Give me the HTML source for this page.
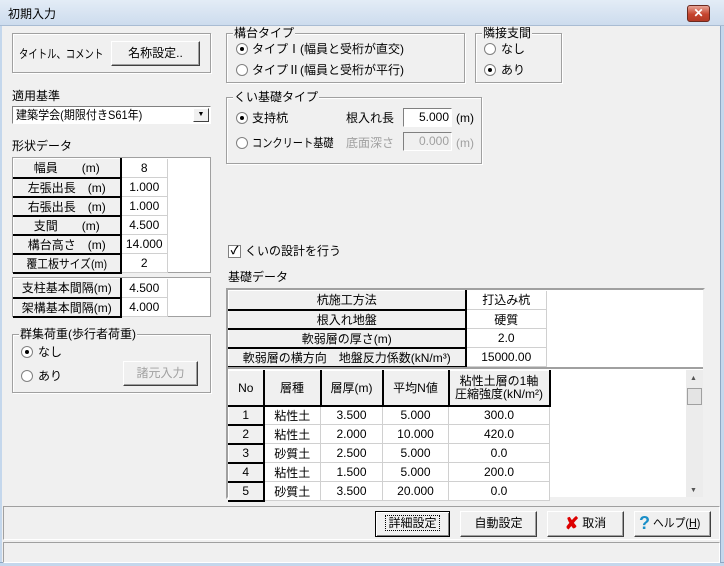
<!DOCTYPE html><html><head><meta charset="utf-8"><style>
*{box-sizing:border-box}
body{margin:0;width:724px;height:566px;overflow:hidden;background:#f0f0f0;font-family:"Liberation Sans","Noto Sans CJK JP",sans-serif;font-size:12px;color:#000;position:relative}
.a{position:absolute}
.t{position:absolute;white-space:nowrap;line-height:14px}
.sx{display:inline-block;transform-origin:left center}
.grp{position:absolute;border:1px solid #a0a0a0;box-shadow:inset 1px 1px 0 #fff,1px 1px 0 #fff}
.grp>.lg{position:absolute;top:-8px;left:6px;background:#f0f0f0;padding:0 1px;line-height:14px}
.btn{position:absolute;background:#f0f0f0;border:1px solid;border-color:#fff #404040 #404040 #fff;box-shadow:inset -1px -1px 0 #a0a0a0;text-align:center;line-height:22px}
.rad{position:absolute;width:12px;height:12px;border-radius:50%;border:1px solid #808080;background:#fff}
.rad.on::after{content:"";position:absolute;left:3px;top:3px;width:4px;height:4px;border-radius:50%;background:#000}
.sunk{position:absolute;border:1px solid;border-color:#a0a0a0 #fff #fff #a0a0a0;background:#fff}
table{border-collapse:collapse;position:absolute;font-size:12px}
td{padding:0;text-align:center;height:19px;white-space:nowrap}
td.h{background:#f0f0f0;border-top:1px solid #fff;border-left:1px solid #fff;border-right:2px solid #000;border-bottom:2px solid #000}
td.v{background:#fff;border-right:1px solid #d0d0d0;border-bottom:1px solid #d0d0d0}
</style></head><body>
<div class="a" style="left:0;top:0;width:724px;height:26px;background:linear-gradient(#e3ecf6,#cddcee);border-bottom:1px solid #a9bcd3"></div>
<div class="t" style="left:8px;top:7px;font-size:12px">初期入力</div>
<div class="a" style="left:687px;top:5px;width:23px;height:17px;background:linear-gradient(#e8a496,#c6452f 55%,#b23a25);border:1px solid #6b2a20;border-radius:3px;color:#fff;text-align:center;font-weight:bold;line-height:15px;font-size:12px">✕</div>
<div class="a" style="left:0;top:26px;width:2px;height:540px;background:#c4d7ec"></div>
<div class="a" style="left:720px;top:26px;width:4px;height:540px;background:#c4d7ec;border-left:1px solid #8fa8c4"></div>
<div class="a" style="left:0;top:562px;width:724px;height:4px;background:#c4d7ec;border-top:1px solid #8fa8c4"></div>

<div class="grp" style="left:12px;top:33px;width:199px;height:40px"></div>
<div class="t" style="left:19px;top:47px"><span class="sx" style="transform:scaleX(.78)">タイトル、コメント</span></div>
<div class="btn" style="left:111px;top:41px;width:89px;height:25px">名称設定..</div>

<div class="t" style="left:12px;top:89px">適用基準</div>
<div class="sunk" style="left:12px;top:106px;width:199px;height:18px;border-color:#808080 #fff #fff #808080"></div>
<div class="t" style="left:16px;top:108px"><span class="sx" style="transform:scaleX(.92)">建築学会(期限付きS61年)</span></div>
<div class="a" style="left:193px;top:108px;width:16px;height:14px;background:#f0f0f0;border:1px solid;border-color:#fff #404040 #404040 #fff;font-size:7px;text-align:center;line-height:12px">▼</div>

<div class="t" style="left:12px;top:139px">形状データ</div>
<div class="a" style="left:12px;top:157px;width:199px;height:116px;background:#fff;border:1px solid #a0a0a0"></div>
<table style="left:13px;top:158px">
<tr><td class="h" style="width:107px">幅員　　(m)</td><td class="v" style="width:47px">8</td></tr>
<tr><td class="h">左張出長　(m)</td><td class="v">1.000</td></tr>
<tr><td class="h">右張出長　(m)</td><td class="v">1.000</td></tr>
<tr><td class="h">支間　　(m)</td><td class="v">4.500</td></tr>
<tr><td class="h">構台高さ　(m)</td><td class="v">14.000</td></tr>
<tr><td class="h"><span class="sx" style="transform:scaleX(.9);transform-origin:center">覆工板サイズ(m)</span></td><td class="v">2</td></tr>
</table>
<div class="a" style="left:12px;top:277px;width:199px;height:40px;background:#fff;border:1px solid #a0a0a0"></div>
<table style="left:13px;top:278px">
<tr><td class="h" style="width:107px">支柱基本間隔(m)</td><td class="v" style="width:47px">4.500</td></tr>
<tr><td class="h">架構基本間隔(m)</td><td class="v">4.000</td></tr>
</table>

<div class="grp" style="left:12px;top:334px;width:199px;height:59px"><span class="lg">群集荷重(歩行者荷重)</span></div>
<div class="rad on" style="left:21px;top:346px"></div><div class="t" style="left:38px;top:345px">なし</div>
<div class="rad" style="left:21px;top:370px"></div><div class="t" style="left:38px;top:369px">あり</div>
<div class="btn" style="left:123px;top:361px;width:75px;height:25px;color:#a0a0a0">諸元入力</div>

<div class="grp" style="left:226px;top:33px;width:239px;height:50px"><span class="lg">構台タイプ</span></div>
<div class="rad on" style="left:236px;top:43px"></div><div class="t" style="left:252px;top:42px">タイプⅠ(幅員と受桁が直交)</div>
<div class="rad" style="left:236px;top:64px"></div><div class="t" style="left:252px;top:63px">タイプⅡ(幅員と受桁が平行)</div>
<div class="grp" style="left:475px;top:33px;width:87px;height:50px"><span class="lg">隣接支間</span></div>
<div class="rad" style="left:484px;top:43px"></div><div class="t" style="left:501px;top:42px">なし</div>
<div class="rad on" style="left:484px;top:64px"></div><div class="t" style="left:501px;top:63px">あり</div>

<div class="grp" style="left:226px;top:97px;width:256px;height:67px"><span class="lg">くい基礎タイプ</span></div>
<div class="rad on" style="left:236px;top:112px"></div><div class="t" style="left:252px;top:111px">支持杭</div>
<div class="t" style="left:346px;top:111px">根入れ長</div>
<div class="sunk" style="left:403px;top:108px;width:49px;height:19px;border-color:#808080 #fff #fff #808080"></div>
<div class="t" style="left:403px;top:110px;width:46px;text-align:right">5.000</div>
<div class="t" style="left:456px;top:111px">(m)</div>
<div class="rad" style="left:236px;top:137px"></div><div class="t" style="left:252px;top:136px"><span class="sx" style="transform:scaleX(.85)">コンクリート基礎</span></div>
<div class="t" style="left:346px;top:136px;color:#a0a0a0">底面深さ</div>
<div class="sunk" style="left:403px;top:132px;width:49px;height:19px;background:#f0f0f0;border-color:#808080 #fff #fff #808080"></div>
<div class="t" style="left:403px;top:134px;width:46px;text-align:right;color:#a0a0a0">0.000</div>
<div class="t" style="left:456px;top:136px;color:#a0a0a0">(m)</div>

<div class="a" style="left:228px;top:245px;width:13px;height:13px;border:1px solid #808080;background:#fff;font-size:11px;line-height:11px;text-align:center;font-weight:bold">✓</div>
<div class="t" style="left:245px;top:244px">くいの設計を行う</div>
<div class="t" style="left:228px;top:270px">基礎データ</div>

<div class="a" style="left:226px;top:288px;width:479px;height:211px;background:#fff;border:2px solid;border-color:#a0a0a0 #f0f0f0 #f0f0f0 #a0a0a0"></div>
<table style="left:228px;top:290px">
<tr><td class="h" style="width:237px">杭施工方法</td><td class="v" style="width:81px">打込み杭</td></tr>
<tr><td class="h">根入れ地盤</td><td class="v">硬質</td></tr>
<tr><td class="h">軟弱層の厚さ(m)</td><td class="v">2.0</td></tr>
<tr><td class="h">軟弱層の横方向　地盤反力係数(kN/m³)</td><td class="v">15000.00</td></tr>
</table>
<div class="a" style="left:228px;top:367px;width:475px;height:2px;background:#a0a0a0"></div>
<table style="left:228px;top:370px">
<tr><td class="h" style="width:35px;height:35px">No</td><td class="h" style="width:57px">層種</td><td class="h" style="width:62px">層厚(m)</td><td class="h" style="width:66px">平均N値</td><td class="h" style="width:101px;line-height:13px">粘性土層の1軸<br>圧縮強度(kN/m²)</td></tr>
<tr><td class="h">1</td><td class="v">粘性土</td><td class="v">3.500</td><td class="v">5.000</td><td class="v">300.0</td></tr>
<tr><td class="h">2</td><td class="v">粘性土</td><td class="v">2.000</td><td class="v">10.000</td><td class="v">420.0</td></tr>
<tr><td class="h">3</td><td class="v">砂質土</td><td class="v">2.500</td><td class="v">5.000</td><td class="v">0.0</td></tr>
<tr><td class="h">4</td><td class="v">粘性土</td><td class="v">1.500</td><td class="v">5.000</td><td class="v">200.0</td></tr>
<tr><td class="h" style="height:18px">5</td><td class="v">砂質土</td><td class="v">3.500</td><td class="v">20.000</td><td class="v">0.0</td></tr>
</table>
<div class="a" style="left:686px;top:370px;width:17px;height:127px;background:#ececec"></div>
<div class="t" style="left:690px;top:372px;font-size:7px;color:#555">▲</div>
<div class="a" style="left:687px;top:388px;width:15px;height:17px;background:#e4e4e4;border:1px solid #a0a0a0"></div>
<div class="t" style="left:690px;top:484px;font-size:7px;color:#555">▼</div>

<div class="a" style="left:3px;top:506px;width:717px;height:34px;border:1px solid;border-color:#a0a0a0 #fff #fff #a0a0a0"></div>
<div class="btn" style="left:375px;top:511px;width:75px;height:26px;border:1px solid #000;box-shadow:inset 1px 1px 0 #fff,inset -1px -1px 0 #808080"><span style="outline:1px dotted #000;padding:0 2px">詳細設定</span></div>
<div class="btn" style="left:460px;top:511px;width:77px;height:26px">自動設定</div>
<div class="btn" style="left:547px;top:511px;width:77px;height:26px"><span style="color:#d00;font-weight:bold;font-size:17px;vertical-align:-2px">✘</span> 取消</div>
<div class="btn" style="left:634px;top:511px;width:77px;height:26px"><span style="color:#1a8fc8;font-weight:bold;font-size:18px;vertical-align:-2px">?</span> <span class="sx" style="transform:scaleX(.9)">ヘルプ(<u>H</u>)</span></div>
<div class="a" style="left:3px;top:542px;width:717px;height:21px;border:1px solid;border-color:#a0a0a0 #fff #fff #a0a0a0"></div>
</body></html>
